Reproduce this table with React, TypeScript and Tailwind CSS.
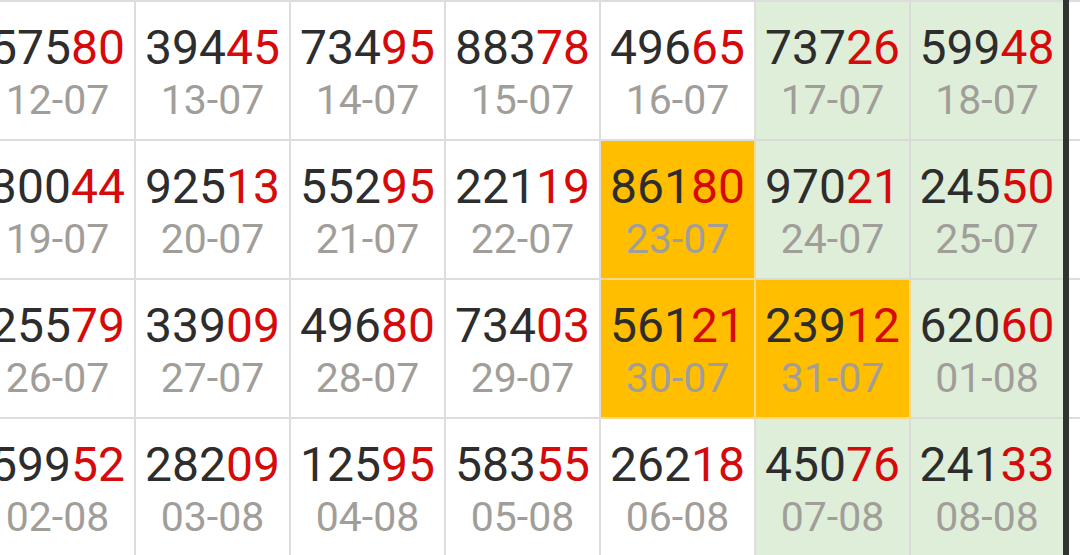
import React from "react";

type Cell = { n: string; d: string; bg?: "o" | "g" };

const rows: Cell[][] = [
  [
    { n: "57580", d: "12-07" },
    { n: "39445", d: "13-07" },
    { n: "73495", d: "14-07" },
    { n: "88378", d: "15-07" },
    { n: "49665", d: "16-07" },
    { n: "73726", d: "17-07", bg: "g" },
    { n: "59948", d: "18-07", bg: "g" },
  ],
  [
    { n: "30044", d: "19-07" },
    { n: "92513", d: "20-07" },
    { n: "55295", d: "21-07" },
    { n: "22119", d: "22-07" },
    { n: "86180", d: "23-07", bg: "o" },
    { n: "97021", d: "24-07", bg: "g" },
    { n: "24550", d: "25-07", bg: "g" },
  ],
  [
    { n: "25579", d: "26-07" },
    { n: "33909", d: "27-07" },
    { n: "49680", d: "28-07" },
    { n: "73403", d: "29-07" },
    { n: "56121", d: "30-07", bg: "o" },
    { n: "23912", d: "31-07", bg: "o" },
    { n: "62060", d: "01-08", bg: "g" },
  ],
  [
    { n: "59952", d: "02-08" },
    { n: "28209", d: "03-08" },
    { n: "12595", d: "04-08" },
    { n: "58355", d: "05-08" },
    { n: "26218", d: "06-08" },
    { n: "45076", d: "07-08", bg: "g" },
    { n: "24133", d: "08-08", bg: "g" },
  ],
];

function CellView({ c, last }: { c: Cell; last: boolean }) {
  const bg =
    c.bg === "o"
      ? "bg-[#ffbf00] border-[#f7d98c]"
      : c.bg === "g"
      ? "bg-[#dfeed9] border-[#d9dcd6]"
      : "bg-white border-[#dddddd]";
  return (
    <div
      className={`${bg} ${
        last ? "w-[152px] border-r-0" : "w-[155px] border-r-2"
      } h-[139px] shrink-0 border-b-2 flex flex-col items-center pt-[22px]`}
    >
      <div className="h-[48px] text-[48px] leading-[48px] whitespace-nowrap">
        <span className="text-[#2d2d2d]">{c.n.slice(0, 3)}</span>
        <span className="text-[#d60a0a]">{c.n.slice(3)}</span>
      </div>
      <div className="mt-[8px] h-[41px] text-[41px] leading-[41px] text-[#a19e99] whitespace-nowrap">
        {c.d}
      </div>
    </div>
  );
}

export default function App() {
  return (
    <div
      className="w-[1080px] h-[555px] overflow-hidden bg-white flex"
      style={{ fontFamily: "Roboto, 'Noto Sans', sans-serif" }}
    >
      <div className="ml-[-19px] shrink-0 flex flex-col border-t-2 border-[#dddddd]">
        {rows.map((r, i) => (
          <div key={i} className="flex">
            {r.map((c, j) => (
              <CellView key={j} c={c} last={j === r.length - 1} />
            ))}
          </div>
        ))}
      </div>
      <div className="w-[6px] shrink-0 h-full bg-[#323432]" />
      <div className="flex-1 flex flex-col border-t-2 border-[#dddddd]">
        {rows.map((_, i) => (
          <div key={i} className="h-[139px] shrink-0 border-b-2 border-[#dddddd]" />
        ))}
      </div>
    </div>
  );
}
